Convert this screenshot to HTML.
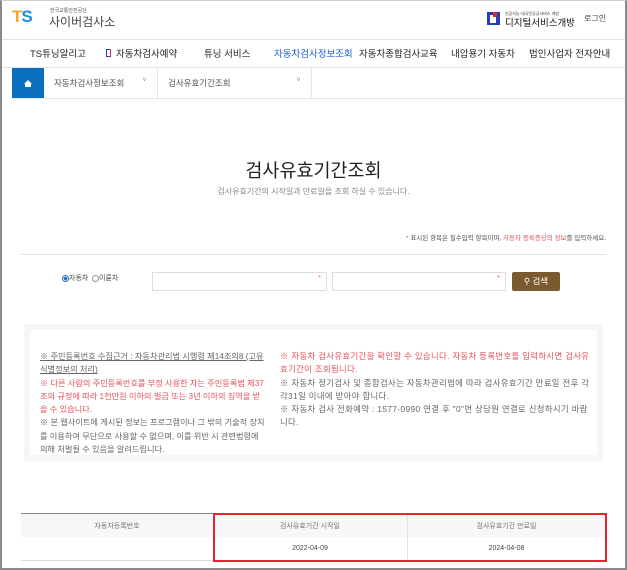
<!DOCTYPE html>
<html><head><meta charset="utf-8"><style>
*{margin:0;padding:0;box-sizing:border-box}
body{width:627px;height:570px;overflow:hidden;background:#fff;font-family:"Liberation Sans","Noto Sans CJK KR",sans-serif;color:#333;position:relative}
.a{position:absolute;white-space:nowrap}
.frame{position:absolute;left:0;top:0;width:627px;height:570px;border:2px solid #8a8a8a;border-top:1px solid #ccc}
.nav{top:46px;font-size:9.5px;color:#222}
.info{font-size:8.2px;line-height:13.3px;color:#666;white-space:normal;word-break:break-all}
.r{color:#e8505b}
</style></head><body>
<div class="frame"></div>
<!-- header -->
<div class="a" style="left:12px;top:7px;font-size:17px;font-weight:bold;letter-spacing:-1px;color:#1b8fd8"><span style="color:#f5a623">T</span>S</div>
<div class="a" style="left:50px;top:7px;font-size:5px;color:#555">한국교통안전공단</div>
<div class="a" style="left:49px;top:13px;font-size:12px;color:#444">사이버검사소</div>
<div class="a" style="left:487px;top:12px;width:13px;height:13px;background:#1e3fbf"><div style="position:absolute;left:3px;top:3px;width:6px;height:8px;background:#fff"></div><div style="position:absolute;left:6px;top:0;width:4px;height:5px;background:#e2262a"></div></div>
<div class="a" style="left:505px;top:11px;font-size:4px;color:#333">인공지능·대국민공공서비스 개방</div>
<div class="a" style="left:505px;top:15px;font-size:9.5px;color:#111">디지털서비스개방</div>
<div class="a" style="left:584px;top:13px;font-size:8px;color:#444">로그인</div>
<div class="a" style="left:2px;top:39px;width:623px;height:1px;background:#e5e5e5"></div>
<!-- nav -->
<div class="a nav" style="left:30px">TS튜닝알리고</div>
<div class="a" style="left:106px;top:49px;width:5px;height:8px;border:1.5px solid #1e3fbf;border-right-color:#e2262a"></div>
<div class="a nav" style="left:116px">자동차검사예약</div>
<div class="a nav" style="left:204px">튜닝 서비스</div>
<div class="a nav" style="left:274px;color:#1b5fd1">자동차검사정보조회</div>
<div class="a nav" style="left:359px">자동차종합검사교육</div>
<div class="a nav" style="left:451px">내압용기 자동차</div>
<div class="a nav" style="left:529px">법인사업자 전자안내</div>
<div class="a" style="left:2px;top:67px;width:623px;height:1px;background:#e5e5e5"></div>
<!-- breadcrumb -->
<div class="a" style="left:12px;top:68px;width:32px;height:30px;background:#0a6fbf"><svg width="32" height="30" viewBox="0 0 32 30"><path d="M12 16 L16 12 L20 16 L19 16 L19 19 L13 19 L13 16Z" fill="#fff"/></svg></div>
<div class="a" style="left:54px;top:77px;font-size:8.5px;color:#555">자동차검사정보조회</div>
<div class="a" style="left:143px;top:77px;font-size:6px;color:#888">v</div>
<div class="a" style="left:157px;top:68px;width:1px;height:30px;background:#e5e5e5"></div>
<div class="a" style="left:168px;top:77px;font-size:8.5px;color:#555">검사유효기간조회</div>
<div class="a" style="left:297px;top:77px;font-size:6px;color:#888">v</div>
<div class="a" style="left:311px;top:68px;width:1px;height:30px;background:#e5e5e5"></div>
<div class="a" style="left:12px;top:98px;width:613px;height:1px;background:#e5e5e5"></div>
<!-- title -->
<div class="a" style="left:0;width:627px;text-align:center;top:157px;font-size:18.5px;color:#222">검사유효기간조회</div>
<div class="a" style="left:0;width:627px;text-align:center;top:186px;font-size:8px;color:#888">검사유효기간의 시작일과 만료일을 조회 하실 수 있습니다.</div>
<div class="a" style="right:21px;top:232px;font-size:6.5px;color:#555"><span class="r">*</span> 표시된 항목은 필수입력 항목이며, <span class="r">자동차 등록증상의 정보</span>를 입력하세요.</div>
<div class="a" style="left:21px;top:254px;width:585px;height:1px;background:#e2e2e2"></div>
<!-- form -->
<div class="a" style="left:62px;top:275px;width:7px;height:7px;border-radius:50%;border:1px solid #1b6fc4;background:radial-gradient(#1b6fc4 45%,#fff 55%)"></div>
<div class="a" style="left:69px;top:273px;font-size:7px;color:#444">자동차</div>
<div class="a" style="left:92px;top:275px;width:7px;height:7px;border-radius:50%;border:1px solid #999"></div>
<div class="a" style="left:99px;top:273px;font-size:7px;color:#444">이륜차</div>
<div class="a" style="left:152px;top:272px;width:175px;height:19px;border:1px solid #ddd"><span style="position:absolute;right:5px;top:2px;font-size:7px;color:#e8505b">*</span></div>
<div class="a" style="left:332px;top:272px;width:174px;height:19px;border:1px solid #ddd"><span style="position:absolute;right:5px;top:2px;font-size:7px;color:#e8505b">*</span></div>
<div class="a" style="left:512px;top:272px;width:48px;height:19px;background:#7b5a30;border-radius:2px;color:#fff;font-size:8.5px;text-align:center;line-height:19px">&#9906; 검색</div>
<!-- info -->
<div class="a" style="left:24px;top:324px;width:579px;height:137px;border:6px solid #f6f6f6"></div>
<div class="a info" style="left:40px;top:350px;width:226px"><u>※ 주민등록번호 수집근거 : 자동차관리법 시행령 제14조의8 (고유식별정보의 처리)</u><br><span class="r">※ 다른 사람의 주민등록번호를 부정 사용한 자는 주민등록법 제37조의 규정에 따라 1천만원 이하의 벌금 또는 3년 이하의 징역을 받을 수 있습니다.</span><br>※ 본 웹사이트에 게시된 정보는 프로그램이나 그 밖의 기술적 장치를 이용하여 무단으로 사용할 수 없으며, 이를 위반 시 관련법령에 의해 처벌될 수 있음을 알려드립니다.</div>
<div class="a info" style="left:280px;top:350px;width:312px;font-size:8.4px;letter-spacing:0.35px"><span class="r">※ 자동차 검사유효기간을 확인할 수 있습니다. 자동차 등록번호를 입력하시면 검사유효기간이 조회됩니다.</span><br>※ 자동차 정기검사 및 종합검사는 자동차관리법에 따라 검사유효기간 만료일 전후 각각31일 이내에 받아야 합니다.<br>※ 자동차 검사 전화예약 : 1577-0990 연결 후 "0"번 상담원 연결로 신청하시기 바랍니다.</div>
<!-- table -->
<div class="a" style="left:21px;top:513px;width:585px;height:1px;background:#888"></div>
<div class="a" style="left:21px;top:514px;width:585px;height:23px;background:#f7f7f7"></div>
<div class="a" style="left:21px;top:560px;width:585px;height:1px;background:#ddd"></div>
<div class="a" style="left:407px;top:514px;width:1px;height:46px;background:#e2e2e2"></div>
<div class="a" style="left:21px;top:521px;width:192px;text-align:center;font-size:7px;color:#777">자동차등록번호</div>
<div class="a" style="left:213px;top:521px;width:194px;text-align:center;font-size:7px;color:#777">검사유효기간 시작일</div>
<div class="a" style="left:407px;top:521px;width:199px;text-align:center;font-size:7px;color:#777">검사유효기간 만료일</div>
<div class="a" style="left:213px;top:545px;width:194px;text-align:center;font-size:7px;color:#444">2022-04-09</div>
<div class="a" style="left:407px;top:545px;width:199px;text-align:center;font-size:7px;color:#444">2024-04-08</div>
<div class="a" style="left:213px;top:513px;width:394px;height:49px;border:2px solid #e8232e"></div>
</body></html>
